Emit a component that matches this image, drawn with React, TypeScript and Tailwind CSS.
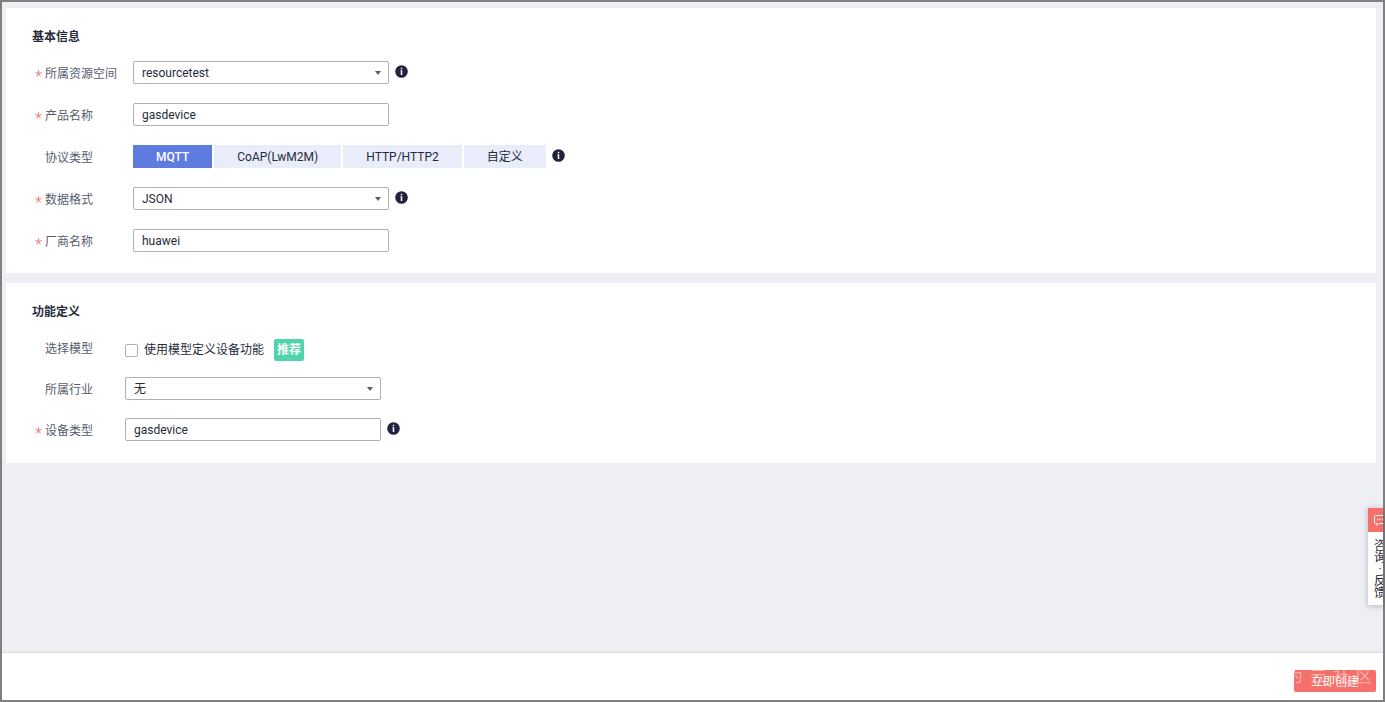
import React, { FC, InputHTMLAttributes, ReactNode, useState } from 'react';

const PROTOCOLS = ['MQTT', 'CoAP(LwM2M)', 'HTTP/HTTP2', '自定义'];

const InfoIcon: FC = () => (
  <button type="button" aria-label="info" className="mt-1 ml-1.5 shrink-0 self-start">
    <svg viewBox="0 0 12 12" className="block size-[13px]">
      <circle cx="6" cy="6" r="5.8" fill="#20233c" />
      <rect x="5.3" y="2.6" width="1.4" height="1.3" fill="#fff" />
      <path d="M4.9 4.8h1.8v4.4H5.3V5.6h-.4z" fill="#fff" />
    </svg>
  </button>
);

type SectionProps = {
  title: string;
  className?: string;
  children: ReactNode;
};

const Section: FC<SectionProps> = ({ title, className = '', children }) => (
  <section className="bg-white px-[26px] pt-5">
    <h2 className="text-xs leading-[18px] font-bold text-[#252b3a]">{title}</h2>
    <div className={`flex flex-col ${className}`}>{children}</div>
  </section>
);

type RowProps = {
  label: string;
  htmlFor?: string;
  required?: boolean;
  labelWidth: string;
  children: ReactNode;
};

const Row: FC<RowProps> = ({ label, htmlFor, required, labelWidth, children }) => (
  <div className="flex h-[23px] items-center">
    <label htmlFor={htmlFor} className={`flex shrink-0 items-center pt-0.5 text-[#575d6c] ${labelWidth}`}>
      <span className="flex w-[13px] justify-end pr-[3px]">
        {required && (
          <svg viewBox="0 0 8 8" className="size-[7px]" aria-hidden="true">
            <path
              d="M4 .5V4M4 4 .6 2.9M4 4l3.4-1.1M4 4 1.9 7.3M4 4l2.1 3.3"
              stroke="#ee6b6b"
              strokeWidth="1.1"
              fill="none"
            />
          </svg>
        )}
      </span>
      {label}
    </label>
    {children}
  </div>
);

const TextField: FC<InputHTMLAttributes<HTMLInputElement>> = (props) => (
  <input
    type="text"
    className="h-[23px] w-64 rounded-xs border border-[#adb0b8] bg-white px-2 text-xs text-[#252b3a] outline-none"
    {...props}
  />
);

const SelectField: FC<{ id: string; options: string[] }> = ({ id, options }) => (
  <div className="relative">
    <select
      id={id}
      className="block h-[23px] w-64 appearance-none rounded-xs border border-[#adb0b8] bg-white px-2 text-xs text-[#252b3a] outline-none"
    >
      {options.map((option) => (
        <option key={option}>{option}</option>
      ))}
    </select>
    <svg viewBox="0 0 6 4" className="pointer-events-none absolute top-[10px] right-2 h-1 w-1.5">
      <path d="M0 0h6L3 4z" fill="#575d6c" />
    </svg>
  </div>
);

const App: FC = () => {
  const [protocol, setProtocol] = useState('MQTT');
  const [useModel, setUseModel] = useState(false);

  return (
    <div className="relative flex min-h-screen flex-col border-2 border-[#808080] bg-[#eeeff5] font-[Roboto,'Noto_Sans_CJK_SC',sans-serif] text-xs text-[#252b3a]">
      <main className="flex flex-1 flex-col gap-2.5 pt-1.5 pr-[7px] pl-1">
        <Section title="基本信息" className="gap-[19px] pt-[15px] pb-[21px]">
          <Row label="所属资源空间" htmlFor="space" required labelWidth="w-[101px]">
            <SelectField id="space" options={['resourcetest']} />
            <InfoIcon />
          </Row>
          <Row label="产品名称" htmlFor="product" required labelWidth="w-[101px]">
            <TextField id="product" defaultValue="gasdevice" />
          </Row>
          <Row label="协议类型" labelWidth="w-[101px]">
            <div className="flex gap-0.5" role="group" aria-label="协议类型">
              {PROTOCOLS.map((item) => (
                <button
                  key={item}
                  type="button"
                  aria-pressed={item === protocol}
                  onClick={() => setProtocol(item)}
                  className={`h-[23px] px-[23px] ${
                    item === protocol ? 'bg-[#5e7ce0] font-medium text-white' : 'bg-[#e9edfa]'
                  }`}
                >
                  {item}
                </button>
              ))}
            </div>
            <InfoIcon />
          </Row>
          <Row label="数据格式" htmlFor="format" required labelWidth="w-[101px]">
            <SelectField id="format" options={['JSON']} />
            <InfoIcon />
          </Row>
          <Row label="厂商名称" htmlFor="vendor" required labelWidth="w-[101px]">
            <TextField id="vendor" defaultValue="huawei" />
          </Row>
        </Section>

        <Section title="功能定义" className="gap-[18px] pt-[15px] pb-[22px]">
          <Row label="选择模型" labelWidth="w-[93px]">
            <div className="flex items-center pt-[5px]">
              <label className="flex items-center">
                <input
                  type="checkbox"
                  checked={useModel}
                  onChange={(e) => setUseModel(e.target.checked)}
                  className="mr-1.5 size-[13px] appearance-none rounded-xs border border-[#adb0b8] bg-white checked:bg-[#5e7ce0]"
                />
                使用模型定义设备功能
              </label>
              <span className="ml-2.5 rounded-xs bg-[#50d4ab] px-[3px] leading-[22px] font-bold text-white">
                推荐
              </span>
            </div>
          </Row>
          <Row label="所属行业" htmlFor="industry" labelWidth="w-[93px]">
            <SelectField id="industry" options={['无']} />
          </Row>
          <Row label="设备类型" htmlFor="device" required labelWidth="w-[93px]">
            <TextField id="device" defaultValue="gasdevice" />
            <InfoIcon />
          </Row>
        </Section>
      </main>

      <footer className="flex justify-end border-t border-[#dfe1e6] bg-white pt-[17px] pr-[7px] pb-2 shadow-[0_-1px_2px_rgba(0,0,0,0.04)]">
        <button
          type="button"
          className="relative h-[22px] overflow-hidden rounded-xs bg-[#f66f6a] px-[17px] pt-0.5 text-white"
        >
          立即创建
          <span
            aria-hidden="true"
            className="absolute -top-px right-1 flex gap-[7px] text-base leading-4 text-white/45"
          >
            <span>为</span>
            <span>云</span>
            <span>社</span>
            <span>区</span>
          </span>
        </button>
      </footer>

      {/* Feedback tab, partly tucked behind the right edge */}
      <aside className="absolute right-0 bottom-[95px] w-[15px] overflow-hidden bg-white shadow-[0_1px_6px_rgba(0,0,0,0.25)]">
        <button type="button" className="block w-6">
          <span className="flex h-6 items-center bg-[#f66f6a] pl-[5px]">
            <svg viewBox="0 0 14 14" className="size-3.5" fill="none" stroke="#fff">
              <path d="M2.5 2.5h9a1 1 0 0 1 1 1v6a1 1 0 0 1-1 1H6l-2 2v-2H2.5a1 1 0 0 1-1-1v-6a1 1 0 0 1 1-1z" />
              <path d="M4 6.5h1.2M6.6 6.5h1.2M9.2 6.5h1.2" strokeWidth="1.3" />
            </svg>
          </span>
          <span className="flex flex-col items-start pt-2 pb-1.5 pl-1.5 leading-3">
            <span>咨</span>
            <span>询</span>
            <span className="w-3 text-center leading-[11px]">·</span>
            <span>反</span>
            <span>馈</span>
          </span>
        </button>
      </aside>
    </div>
  );
};

export default App;
